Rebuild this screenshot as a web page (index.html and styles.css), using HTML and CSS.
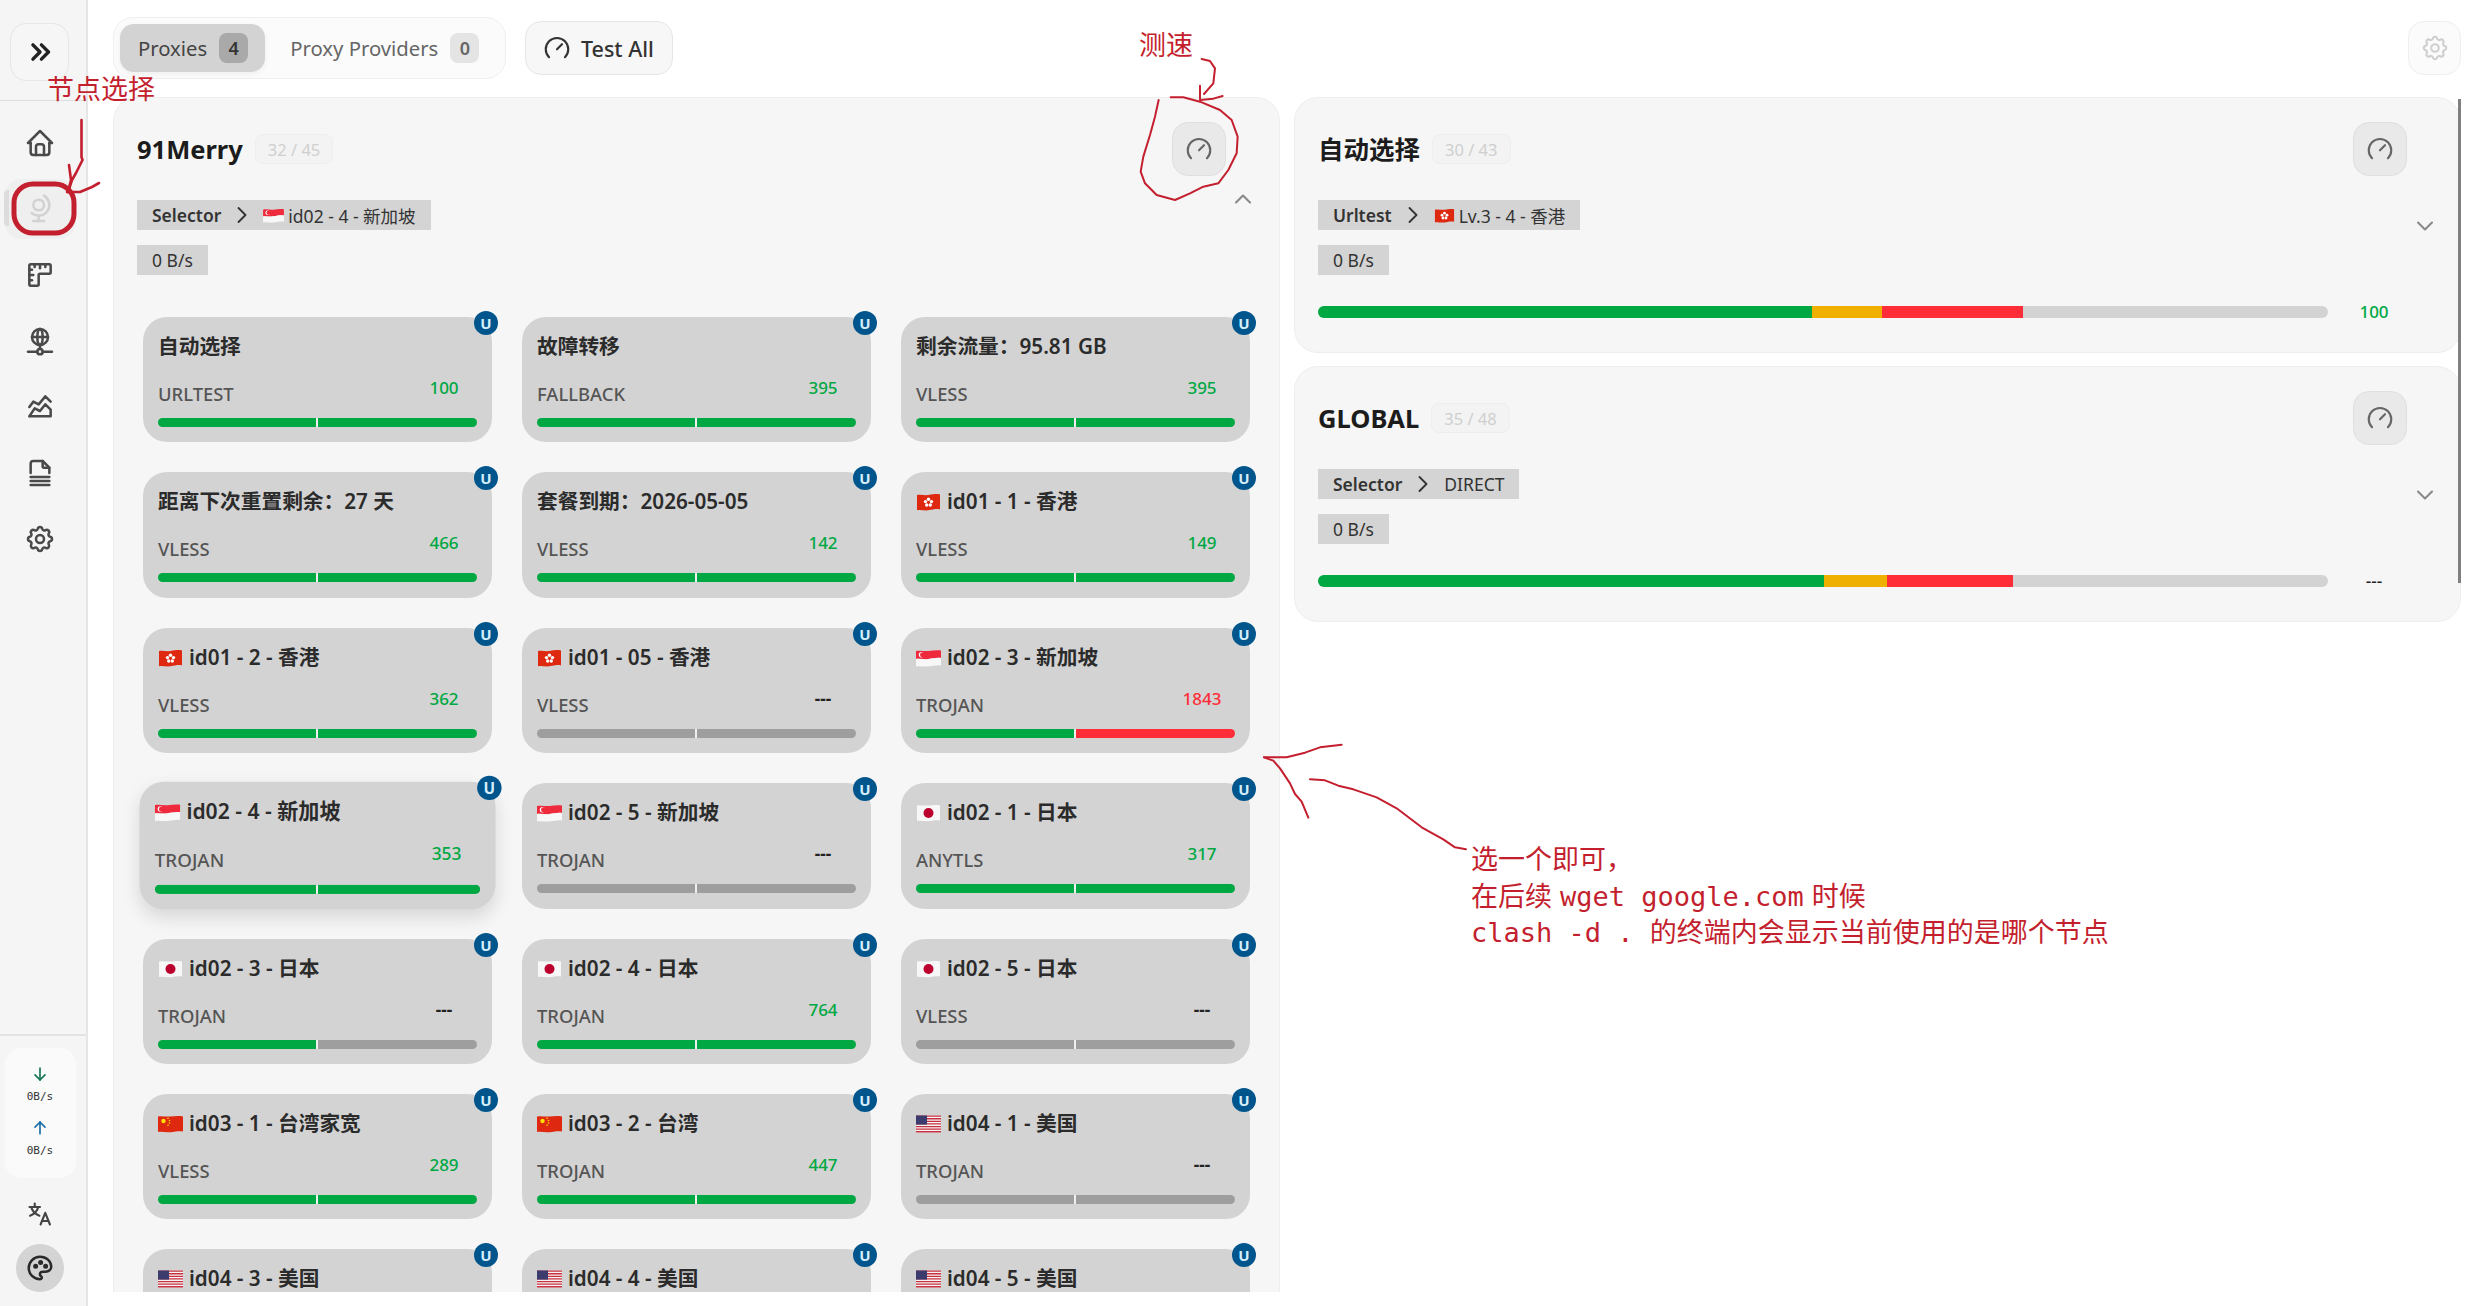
FILE: index.html
```html
<!DOCTYPE html>
<html lang="zh">
<head>
<meta charset="utf-8">
<title>Proxies</title>
<link rel="stylesheet" href="styles.css">
</head>
<body>
<svg class="defs" width="0" height="0" aria-hidden="true">
  <defs>
    <symbol id="i-home" viewBox="0 0 24 24"><path d="M5 12l-2 0l9 -9l9 9l-2 0"/><path d="M5 12v7a2 2 0 0 0 2 2h10a2 2 0 0 0 2 -2v-7"/><path d="M9 21v-6a2 2 0 0 1 2 -2h2a2 2 0 0 1 2 2v6"/></symbol>
    <symbol id="i-globe" viewBox="0 0 24 24"><path d="M7 9a4 4 0 1 0 8 0a4 4 0 0 0 -8 0"/><path d="M5.75 15a8.015 8.015 0 1 0 9.25 -13"/><path d="M11 17v4"/><path d="M7 21h8"/></symbol>
    <symbol id="i-ruler" viewBox="0 0 24 24"><path d="M5 4h14a1 1 0 0 1 1 1v5a1 1 0 0 1 -1 1h-7a1 1 0 0 0 -1 1v7a1 1 0 0 1 -1 1h-5a1 1 0 0 1 -1 -1v-14a1 1 0 0 1 1 -1"/><path d="M4 8l2 0"/><path d="M4 12l3 0"/><path d="M4 16l2 0"/><path d="M8 4l0 2"/><path d="M12 4l0 3"/><path d="M16 4l0 2"/></symbol>
    <symbol id="i-net" viewBox="0 0 24 24"><path d="M6 9a6 6 0 1 0 12 0a6 6 0 0 0 -12 0"/><path d="M12 3c1.333 .333 2 2.333 2 6s-.667 5.667 -2 6"/><path d="M12 3c-1.333 .333 -2 2.333 -2 6s.667 5.667 2 6"/><path d="M6 9h12"/><path d="M3 20h7"/><path d="M14 20h7"/><path d="M10 20a2 2 0 1 0 4 0a2 2 0 0 0 -4 0"/><path d="M12 15v3"/></symbol>
    <symbol id="i-chart" viewBox="0 0 24 24"><path d="M4 19l4 -6l4 2l4 -5l4 4l0 5l-16 0"/><path d="M4 12l3 -4l4 2l5 -6l4 4"/></symbol>
    <symbol id="i-file" viewBox="0 0 24 24"><path d="M14 3v4a1 1 0 0 0 1 1h4"/><path d="M5 12v-7a2 2 0 0 1 2 -2h7l5 5v4"/><path d="M5 21h14"/><path d="M5 18h14"/><path d="M5 15h14"/></symbol>
    <symbol id="i-gear" viewBox="0 0 24 24"><path d="M10.325 4.317c.426 -1.756 2.924 -1.756 3.35 0a1.724 1.724 0 0 0 2.573 1.066c1.543 -.94 3.31 .826 2.37 2.37a1.724 1.724 0 0 0 1.065 2.572c1.756 .426 1.756 2.924 0 3.35a1.724 1.724 0 0 0 -1.066 2.573c.94 1.543 -.826 3.31 -2.37 2.37a1.724 1.724 0 0 0 -2.572 1.065c-.426 1.756 -2.924 1.756 -3.35 0a1.724 1.724 0 0 0 -2.573 -1.066c-1.543 .94 -3.31 -.826 -2.37 -2.37a1.724 1.724 0 0 0 -1.065 -2.572c-1.756 -.426 -1.756 -2.924 0 -3.35a1.724 1.724 0 0 0 1.066 -2.573c-.94 -1.543 .826 -3.31 2.37 -2.37c1 .608 2.296 .07 2.572 -1.065"/><path d="M9 12a3 3 0 1 0 6 0a3 3 0 0 0 -6 0"/></symbol>
    <symbol id="i-speed" viewBox="0 0 24 24"><path d="M5.636 19.364a9 9 0 1 1 12.728 0"/><path d="M16 9l-4 4"/></symbol>
    <symbol id="i-dbl" viewBox="0 0 24 24"><path d="M7 7l5 5l-5 5"/><path d="M13 7l5 5l-5 5"/></symbol>
    <symbol id="i-right" viewBox="0 0 24 24"><path d="M9 6l6 6l-6 6"/></symbol>
    <symbol id="i-up" viewBox="0 0 24 24"><path d="M6 15l6 -6l6 6"/></symbol>
    <symbol id="i-down" viewBox="0 0 24 24"><path d="M6 9l6 6l6 -6"/></symbol>
    <symbol id="i-adown" viewBox="0 0 24 24"><path d="M12 5l0 14"/><path d="M18 13l-6 6"/><path d="M6 13l6 6"/></symbol>
    <symbol id="i-aup" viewBox="0 0 24 24"><path d="M12 5l0 14"/><path d="M18 11l-6 -6"/><path d="M6 11l6 -6"/></symbol>
    <symbol id="i-lang" viewBox="0 0 24 24"><path d="M3 6h9"/><path d="M7.5 3v3"/><path d="M4.5 6c.8 3.5 3.2 6 7 7.5"/><path d="M10.5 6c-.8 3.5 -3.2 6 -7 7.5"/><path d="M12.5 21l4 -10l4 10"/><path d="M14 18h5"/></symbol>
    <symbol id="i-palette" viewBox="0 0 24 24"><path d="M12 21a9 9 0 0 1 0 -18c4.97 0 9 3.582 9 8c0 1.06 -.474 2.078 -1.318 2.828c-.844 .75 -1.989 1.172 -3.182 1.172h-2.5a2 2 0 0 0 -1 3.75a1.3 1.3 0 0 1 -1 2.25"/><path d="M8.5 10.5m-1 0a1 1 0 1 0 2 0a1 1 0 1 0 -2 0"/><path d="M12.5 7.5m-1 0a1 1 0 1 0 2 0a1 1 0 1 0 -2 0"/><path d="M16.5 10.5m-1 0a1 1 0 1 0 2 0a1 1 0 1 0 -2 0"/></symbol>
    <symbol id="f-hk" viewBox="0 0 25 18"><path d="M1 2c4-1 7 .6 11.5 0S20 .6 24 1.4v15c-4-.8-7 .3-11.5 .9S5 16.400 1 17.200z" fill="#de2910"/><circle cx="12.5" cy="6.200" r="1.700" fill="#fff"/><circle cx="9.500" cy="8.600" r="1.700" fill="#fff"/><circle cx="15.500" cy="8.600" r="1.700" fill="#fff"/><circle cx="10.700" cy="12" r="1.700" fill="#fff"/><circle cx="14.300" cy="12" r="1.700" fill="#fff"/></symbol>
    <symbol id="f-sg" viewBox="0 0 25 18"><path d="M0 2c4-1 8 .5 12.500 0S21 .8 25 1.500v7.500c-4-.7-8 .4-12.500 1S4 9.400 0 10z" fill="#ee2a3c"/><path d="M0 10c4-.6 8 .6 12.500 0S21 8.300 25 9v7.500c-4-.7-8 .5-12.500 1S4 16.600 0 17.500z" fill="#f7f7f7"/><circle cx="5.500" cy="5.700" r="2.700" fill="#fff"/><circle cx="6.600" cy="5.700" r="2.500" fill="#ee2a3c"/></symbol>
    <symbol id="f-jp" viewBox="0 0 25 18"><path d="M1 1.500c4-.8 7 .5 11.500 0S20 .8 24 1.400v15c-4-.6-7 .3-11.500 .8S5 16.400 1 17z" fill="#f7f7f7"/><circle cx="12.500" cy="9" r="5" fill="#bc002d"/></symbol>
    <symbol id="f-cn" viewBox="0 0 25 18"><path d="M0 1.500c4-.8 8 .5 12.500 0S21 .8 25 1.400v15c-4-.6-8 .3-12.500 .8S4 16.400 0 17z" fill="#de2910"/><circle cx="5.500" cy="6" r="2.200" fill="#ffde00"/><circle cx="10" cy="3.200" r=".8" fill="#ffde00"/><circle cx="11.500" cy="5.500" r=".8" fill="#ffde00"/><circle cx="11.500" cy="8" r=".8" fill="#ffde00"/><circle cx="10" cy="10.200" r=".8" fill="#ffde00"/></symbol>
    <symbol id="f-us" viewBox="0 0 25 18"><rect width="25" height="17" y=".5" fill="#f5f5f5"/><path d="M0 .5h25v1.300H0zM0 3.100h25v1.300H0zM0 5.700h25v1.300H0zM0 8.300h25v1.300H0zM0 10.900h25v1.300H0zM0 13.500h25v1.300H0zM0 16.100h25v1.400H0z" fill="#c8303f"/><rect width="11" y=".5" height="9.100" fill="#3c3b6e"/></symbol>
  </defs>
</svg>

<aside class="sidebar">
  <div class="side-top">
    <button class="expand"><svg class="ico ico-expand"><use href="#i-dbl"/></svg></button>
  </div>
  <nav class="nav">
    <a class="nav-item"><svg class="ico"><use href="#i-home"/></svg></a>
    <a class="nav-item active"><svg class="ico"><use href="#i-globe"/></svg></a>
    <a class="nav-item"><svg class="ico"><use href="#i-ruler"/></svg></a>
    <a class="nav-item"><svg class="ico"><use href="#i-net"/></svg></a>
    <a class="nav-item"><svg class="ico"><use href="#i-chart"/></svg></a>
    <a class="nav-item"><svg class="ico"><use href="#i-file"/></svg></a>
    <a class="nav-item"><svg class="ico"><use href="#i-gear"/></svg></a>
  </nav>
  <div class="side-bottom">
    <div class="traffic">
      <svg class="ico-arrow down"><use href="#i-adown"/></svg>
      <span class="rate">0B/s</span>
      <svg class="ico-arrow up"><use href="#i-aup"/></svg>
      <span class="rate">0B/s</span>
    </div>
    <svg class="ico ico-lang"><use href="#i-lang"/></svg>
    <div class="palette"><svg class="ico ico-pal"><use href="#i-palette"/></svg></div>
  </div>
</aside>

<main class="main">
  <header class="topbar">
    <div class="tabs">
      <div class="tab active">Proxies <span class="count">4</span></div>
      <div class="tab">Proxy Providers <span class="count">0</span></div>
    </div>
    <button class="test-all"><svg class="ico ico-test"><use href="#i-speed"/></svg>Test All</button>
    <button class="settings"><svg class="ico ico-set"><use href="#i-gear"/></svg></button>
  </header>

  <div class="columns">
    <section class="panel panel-main">
      <div class="panel-head">
        <div class="name"><h2>91Merry</h2><span class="pill">32 / 45</span></div>
        <button class="speed"><svg class="ico ico-speed"><use href="#i-speed"/></svg></button>
      </div>
      <div class="meta">
        <div class="tags">
          <div class="tag"><b>Selector</b><svg class="ico-chev"><use href="#i-right"/></svg><svg class="flag-sm"><use href="#f-sg"/></svg>id02 - 4 - 新加坡</div>
          <div class="tag">0 B/s</div>
        </div>
        <svg class="toggle toggle-up"><use href="#i-up"/></svg>
      </div>
      <div class="grid">
        <article class="card"><span class="u">U</span><h3>自动选择</h3><div class="row"><span class="type">URLTEST</span><span class="ms good">100</span></div><div class="bar"><i class="g"></i><i class="g"></i></div></article>
        <article class="card"><span class="u">U</span><h3>故障转移</h3><div class="row"><span class="type">FALLBACK</span><span class="ms good">395</span></div><div class="bar"><i class="g"></i><i class="g"></i></div></article>
        <article class="card"><span class="u">U</span><h3>剩余流量<span class="tc">：</span>95.81 GB</h3><div class="row"><span class="type">VLESS</span><span class="ms good">395</span></div><div class="bar"><i class="g"></i><i class="g"></i></div></article>

        <article class="card"><span class="u">U</span><h3>距离下次重置剩余<span class="tc">：</span>27 天</h3><div class="row"><span class="type">VLESS</span><span class="ms good">466</span></div><div class="bar"><i class="g"></i><i class="g"></i></div></article>
        <article class="card"><span class="u">U</span><h3>套餐到期<span class="tc">：</span>2026-05-05</h3><div class="row"><span class="type">VLESS</span><span class="ms good">142</span></div><div class="bar"><i class="g"></i><i class="g"></i></div></article>
        <article class="card"><span class="u">U</span><h3><svg class="flag"><use href="#f-hk"/></svg>id01 - 1 - 香港</h3><div class="row"><span class="type">VLESS</span><span class="ms good">149</span></div><div class="bar"><i class="g"></i><i class="g"></i></div></article>

        <article class="card"><span class="u">U</span><h3><svg class="flag"><use href="#f-hk"/></svg>id01 - 2 - 香港</h3><div class="row"><span class="type">VLESS</span><span class="ms good">362</span></div><div class="bar"><i class="g"></i><i class="g"></i></div></article>
        <article class="card"><span class="u">U</span><h3><svg class="flag"><use href="#f-hk"/></svg>id01 - 05 - 香港</h3><div class="row"><span class="type">VLESS</span><span class="ms none">---</span></div><div class="bar"><i class="n"></i><i class="n"></i></div></article>
        <article class="card"><span class="u">U</span><h3><svg class="flag"><use href="#f-sg"/></svg>id02 - 3 - 新加坡</h3><div class="row"><span class="type">TROJAN</span><span class="ms bad">1843</span></div><div class="bar"><i class="g"></i><i class="r"></i></div></article>

        <article class="card selected"><span class="u">U</span><h3><svg class="flag"><use href="#f-sg"/></svg>id02 - 4 - 新加坡</h3><div class="row"><span class="type">TROJAN</span><span class="ms good">353</span></div><div class="bar"><i class="g"></i><i class="g"></i></div></article>
        <article class="card"><span class="u">U</span><h3><svg class="flag"><use href="#f-sg"/></svg>id02 - 5 - 新加坡</h3><div class="row"><span class="type">TROJAN</span><span class="ms none">---</span></div><div class="bar"><i class="n"></i><i class="n"></i></div></article>
        <article class="card"><span class="u">U</span><h3><svg class="flag"><use href="#f-jp"/></svg>id02 - 1 - 日本</h3><div class="row"><span class="type">ANYTLS</span><span class="ms good">317</span></div><div class="bar"><i class="g"></i><i class="g"></i></div></article>

        <article class="card"><span class="u">U</span><h3><svg class="flag"><use href="#f-jp"/></svg>id02 - 3 - 日本</h3><div class="row"><span class="type">TROJAN</span><span class="ms none">---</span></div><div class="bar"><i class="g"></i><i class="n"></i></div></article>
        <article class="card"><span class="u">U</span><h3><svg class="flag"><use href="#f-jp"/></svg>id02 - 4 - 日本</h3><div class="row"><span class="type">TROJAN</span><span class="ms good">764</span></div><div class="bar"><i class="g"></i><i class="g"></i></div></article>
        <article class="card"><span class="u">U</span><h3><svg class="flag"><use href="#f-jp"/></svg>id02 - 5 - 日本</h3><div class="row"><span class="type">VLESS</span><span class="ms none">---</span></div><div class="bar"><i class="n"></i><i class="n"></i></div></article>

        <article class="card"><span class="u">U</span><h3><svg class="flag"><use href="#f-cn"/></svg>id03 - 1 - 台湾家宽</h3><div class="row"><span class="type">VLESS</span><span class="ms good">289</span></div><div class="bar"><i class="g"></i><i class="g"></i></div></article>
        <article class="card"><span class="u">U</span><h3><svg class="flag"><use href="#f-cn"/></svg>id03 - 2 - 台湾</h3><div class="row"><span class="type">TROJAN</span><span class="ms good">447</span></div><div class="bar"><i class="g"></i><i class="g"></i></div></article>
        <article class="card"><span class="u">U</span><h3><svg class="flag"><use href="#f-us"/></svg>id04 - 1 - 美国</h3><div class="row"><span class="type">TROJAN</span><span class="ms none">---</span></div><div class="bar"><i class="n"></i><i class="n"></i></div></article>

        <article class="card"><span class="u">U</span><h3><svg class="flag"><use href="#f-us"/></svg>id04 - 3 - 美国</h3></article>
        <article class="card"><span class="u">U</span><h3><svg class="flag"><use href="#f-us"/></svg>id04 - 4 - 美国</h3></article>
        <article class="card"><span class="u">U</span><h3><svg class="flag"><use href="#f-us"/></svg>id04 - 5 - 美国</h3></article>
      </div>
    </section>

    <div class="side-col">
      <section class="panel panel-small">
        <div class="panel-head">
          <div class="name"><h2>自动选择</h2><span class="pill">30 / 43</span></div>
          <button class="speed"><svg class="ico ico-speed"><use href="#i-speed"/></svg></button>
        </div>
        <div class="meta">
          <div class="tags">
            <div class="tag"><b>Urltest</b><svg class="ico-chev"><use href="#i-right"/></svg><svg class="flag-sm"><use href="#f-hk"/></svg>Lv.3 - 4 - 香港</div>
            <div class="tag">0 B/s</div>
          </div>
          <svg class="toggle toggle-down"><use href="#i-down"/></svg>
        </div>
        <div class="usage">
          <div class="stack"><i class="s-g s1"></i><i class="s-y s2"></i><i class="s-r s3"></i></div>
          <span class="usage-ms good">100</span>
        </div>
      </section>
      <section class="panel panel-small">
        <div class="panel-head">
          <div class="name"><h2>GLOBAL</h2><span class="pill">35 / 48</span></div>
          <button class="speed"><svg class="ico ico-speed"><use href="#i-speed"/></svg></button>
        </div>
        <div class="meta">
          <div class="tags">
            <div class="tag"><b>Selector</b><svg class="ico-chev"><use href="#i-right"/></svg>DIRECT</div>
            <div class="tag">0 B/s</div>
          </div>
          <svg class="toggle toggle-down"><use href="#i-down"/></svg>
        </div>
        <div class="usage">
          <div class="stack"><i class="s-g s4"></i><i class="s-y s5"></i><i class="s-r s6"></i></div>
          <span class="usage-ms none">---</span>
        </div>
      </section>
    </div>
    <div class="scrollbar"></div>
  </div>
</main>

<svg class="ink" width="2480" height="1306" viewBox="0 0 2480 1306" aria-hidden="true">
  <rect class="ink-thick" x="14" y="184" width="60" height="49" rx="19"/>
  <g class="ink-line">
    <path d="M81.500 120 81.500 157 82.500 160 76 173 72 180 68 192"/>
    <path d="M69 165 71 180 68 192"/>
    <path d="M67 192 80 192 92 187 99 183"/>
  </g>
  <g class="ink-z" transform="translate(1100 20) scale(.3333)">
    <path d="M176 240 165 290 150 345 130 410 122 455 135 490 170 525 225 540 270 520 310 500 355 490 385 450 410 400 413 350 395 300 360 270 300 245 250 232 212 232"/>
    <path d="M305 117 330 123 345 145 340 190 312 222"/>
    <path d="M300 197 300 240 340 236 368 228"/>
  </g>
  <g class="ink-z" transform="translate(1240 720) scale(.3333)">
    <path d="M72 112 140 112 195 98 240 82 305 74"/>
    <path d="M72 112 100 122 120 145 150 190 165 222 185 245 205 293"/>
    <path d="M210 178 255 181 295 197 340 208 410 232 470 265 545 322 610 358 645 382 678 388"/>
  </g>
</svg>
<p class="note note-node">节点选择</p>
<p class="note note-speed">测速</p>
<p class="note note-main"><span class="ln">选一个即可<span class="tc">，</span></span><span class="ln">在后续<span class="thin"></span>wget google.com<span class="thin"></span>时候</span><span class="ln">clash -d . 的终端内会显示当前使用的是哪个节点</span></p>
</body>
</html>
```

FILE: styles.css
```css
* { box-sizing: border-box; }
html, body { margin: 0; height: 100%; }
body {
  display: flex;
  height: 100vh;
  overflow: hidden;
  position: relative;
  background: #fff;
  color: #333;
  font-family: "Noto Sans", "Noto Sans CJK SC", sans-serif;
}
.defs { position: absolute; }
button { font: inherit; color: inherit; padding: 0; }
h2, h3, p { margin: 0; }
i { display: block; }
.tc { font-family: "Noto Sans CJK TC", sans-serif; line-height: 1; }

.ico { width: 32px; height: 32px; fill: none; stroke: #4a4a4a; stroke-width: 1.9; stroke-linecap: round; stroke-linejoin: round; }

/* sidebar */
.sidebar {
  width: 88px;
  flex: none;
  display: flex;
  flex-direction: column;
  background: #f5f5f5;
  border-right: 2px solid #e6e6e6;
}
.side-top { height: 101px; padding: 23px 0 0 10px; border-bottom: 1px solid #dedede; }
.expand {
  width: 59px; height: 58px;
  display: flex; align-items: center; justify-content: center;
  background: #f6f6f6;
  border: 1px solid #e6e6e6;
  border-radius: 16px;
}
.ico-expand { width: 34px; height: 34px; stroke: #222; stroke-width: 2.4; }
.nav { display: flex; flex-direction: column; gap: 6px; padding: 12px 0 0; }
.nav-item {
  height: 60px;
  margin: 0 10px 0 4px;
  display: flex; align-items: center; justify-content: center;
  border-radius: 18px;
  position: relative;
}
.nav-item .ico { margin-left: -8px; margin-right: -8px; }
.nav-item.active { background: #efefef; }
.nav-item.active::before {
  content: ""; position: absolute; left: 0; top: 11px; width: 5px; height: 36px;
  background: #dcdcdc; border-radius: 4px 0 0 4px;
}
.nav-item.active .ico { stroke: #d2d2d2; }
.side-bottom { margin-top: auto; border-top: 2px solid #e3e3e3; padding: 12px 0 14px; display: flex; flex-direction: column; align-items: center; }
.traffic {
  width: 71px; height: 130px;
  margin: 0 6px 0 0;
  padding-top: 16px;
  background: #fafafa;
  border-radius: 16px;
  display: flex; flex-direction: column; align-items: center;
}
.ico-arrow { width: 20px; height: 20px; fill: none; stroke-width: 2; stroke-linecap: round; stroke-linejoin: round; }
.ico-arrow.down { stroke: #17775a; }
.ico-arrow.up { stroke: #1b6ea8; margin-top: 13px; }
.rate { font: 11px/16px "DejaVu Sans Mono", monospace; color: #333; margin-top: 5px; }
.ico-lang { width: 28px; height: 28px; margin: 22px 6px 0 0; stroke: #444; stroke-width: 1.8; }
.palette {
  width: 48px; height: 48px; margin: 16px 6px 0 0;
  border-radius: 50%; background: #d4d4d4;
  display: flex; align-items: center; justify-content: center;
}
.ico-pal { width: 30px; height: 30px; stroke: #2a2a2a; stroke-width: 2; }

/* main */
.main { flex: 1; min-width: 0; padding: 17px 19px 14px 25px; display: flex; flex-direction: column; }
.topbar { display: flex; align-items: center; gap: 19px; height: 62px; margin-bottom: 18px; flex: none; }
.tabs {
  display: flex; align-items: center; gap: 0;
  height: 62px; width: 393px; padding: 0 6px;
  background: #fbfbfb; border: 1px solid #efefef; border-radius: 20px;
}
.tab {
  height: 48px; padding: 0 17px 0 18px;
  display: flex; align-items: center; gap: 12px;
  font-size: 20.300px; color: #666; border-radius: 14px;
}
.tab:last-child { padding-left: 25px; gap: 12px; }
.tab.active { background: #d3d3d3; color: #444; box-shadow: 0 2px 6px rgba(0,0,0,.05); }
.count {
  min-width: 29px; height: 30px; padding: 0 8px;
  display: flex; align-items: center; justify-content: center;
  border-radius: 8px; background: #e4e4e4; font-size: 18px; font-weight: 600; color: #666;
}
.tab.active .count { background: #a9a9a9; color: #333; }
.test-all {
  width: 148px; height: 54px;
  display: flex; align-items: center; gap: 9px; padding-left: 16px;
  background: #f7f7f7; border: 1px solid #e6e6e6; border-radius: 16px;
  font-size: 21.500px; font-weight: 500; color: #333;
}
.ico-test { width: 30px; height: 30px; stroke: #333; stroke-width: 1.7; }
.settings {
  margin-left: auto; width: 53px; height: 54px;
  display: flex; align-items: center; justify-content: center;
  background: #fbfbfb; border: 1px solid #eee; border-radius: 16px;
}
.ico-set { width: 30px; height: 30px; stroke: #cfcfcf; stroke-width: 1.7; }

.columns {
  flex: 1; min-height: 0; overflow: hidden; position: relative;
  display: grid; grid-template-columns: 1167px 1167px; column-gap: 14px; align-items: start;
}
.panel {
  position: relative;
  background: #f6f6f6;
  border: 1px solid #eeeeee;
  border-radius: 24px;
  padding: 24px 30px 0 23px;
}
.panel-main { border-radius: 24px 24px 0 0; min-height: 1300px; }
.side-col { display: flex; flex-direction: column; gap: 13px; }
.panel-small { height: 256px; }
.panel-head { display: flex; align-items: center; justify-content: space-between; height: 54px; padding-right: 23px; }
.name { display: flex; align-items: center; gap: 12px; }
h2 { font-size: 25.500px; font-weight: 700; color: #1c1c1c; line-height: 36px; }
.pill {
  height: 30px; padding: 0 12px;
  display: flex; align-items: center;
  font-size: 16.500px; color: #cfcfcf;
  background: #f3f3f3; border: 1px solid #eeeeee; border-radius: 8px;
}
.speed {
  width: 54px; height: 54px;
  display: flex; align-items: center; justify-content: center;
  background: #e9e9e9; border: 1px solid #dfdfdf; border-radius: 16px;
}
.ico-speed { width: 30px; height: 30px; stroke: #666; stroke-width: 1.7; }

.meta { display: flex; justify-content: space-between; align-items: flex-start; margin-top: 24px; }
.tags { display: flex; flex-direction: column; align-items: flex-start; gap: 15px; }
.tag {
  height: 30px; padding: 0 15px;
  display: flex; align-items: center;
  background: #d4d4d4;
  font-size: 17.500px; color: #333;
}
.tag b { font-weight: 600; }
.ico-chev { width: 28px; height: 28px; margin: 0 7px; fill: none; stroke: #333; stroke-width: 1.6; stroke-linecap: round; stroke-linejoin: round; }
.flag-sm { width: 21px; height: 15px; margin-right: 4px; }
.toggle { width: 28px; height: 28px; fill: none; stroke: #888; stroke-width: 1.8; stroke-linecap: round; stroke-linejoin: round; }
.toggle-up { margin: -15px -8px 0 0; }
.toggle-down { margin: 12px -9px 0 0; }

.grid {
  display: grid;
  grid-template-columns: repeat(3, 349px);
  grid-auto-rows: 125.400px;
  column-gap: 30px;
  row-gap: 30px;
  margin: 42px 0 0 6px;
}
.card {
  position: relative;
  background: #d3d3d3;
  border-radius: 24px;
  padding: 16px 15px 0;
}
.card.selected { transform: scale(1.02); box-shadow: 0 8px 18px rgba(0,0,0,.12); }
.card h3 {
  height: 26px;
  font-size: 20.700px; line-height: 26px; font-weight: 600; color: #2b2b2b;
  white-space: pre;
}
.flag { width: 25px; height: 18px; margin-right: 6px; vertical-align: -2px; }
.u {
  position: absolute; top: -6px; right: -6px;
  width: 24px; height: 24px; border-radius: 50%;
  background: #00558c; color: #d5eefc;
  display: flex; align-items: center; justify-content: center;
  font-size: 15px; font-weight: 700;
}
.row { display: flex; justify-content: space-between; height: 49px; padding-top: 23px; }
.type { font-size: 18.400px; line-height: 24px; font-weight: 500; color: #555; }
.ms { width: 66px; text-align: center; font-size: 17px; line-height: 24px; font-weight: 500; margin-top: -6px; }
.good { color: #00a843; }
.bad { color: #ff2d38; }
.none { color: #222; font-weight: 700; }
.bar { display: flex; height: 9px; margin-top: 10px; border-radius: 5px; overflow: hidden; }
.bar i { flex: 1; }
.bar i + i { border-left: 2px solid #efefef; margin-left: -1px; }
.bar .g { background: #00a843; }
.bar .r { background: #ff2d38; }
.bar .n { background: #9e9e9e; }

.usage { display: flex; align-items: center; margin-top: 25px; }
.stack { width: 1010px; height: 12px; display: flex; background: #d3d3d3; border-radius: 6px; overflow: hidden; }
.s-g { background: #00a843; }
.s-y { background: #f0b000; }
.s-r { background: #ff2d38; }
.s1 { width: 494px; } .s2 { width: 70px; } .s3 { width: 141px; }
.s4 { width: 506px; } .s5 { width: 63px; } .s6 { width: 126px; }
.usage-ms { width: 92px; text-align: center; font-size: 17px; font-weight: 500; }

.scrollbar { position: absolute; right: 0; top: 2px; width: 3px; height: 484px; background: #808080; }

/* hand-drawn annotation layer */
.ink { position: absolute; left: 0; top: 0; pointer-events: none; }
.ink-thick { fill: none; stroke: #c41f2e; stroke-width: 5; }
.ink-line { fill: none; stroke: #c41f2e; stroke-width: 2.600; stroke-linecap: round; stroke-linejoin: round; }
.ink-z { fill: none; stroke: #c41f2e; stroke-width: 6; stroke-linecap: round; stroke-linejoin: round; }
.note {
  position: absolute;
  color: #c41f2e;
  font-size: 27px;
  line-height: 36.800px;
  font-family: "DejaVu Sans Mono", "Noto Sans CJK SC", monospace;
  white-space: pre;
}
.ln { display: block; height: 36.500px; }
.thin { display: inline-block; width: 8px; }
.note-node { left: 47px; top: 72px; }
.note-speed { left: 1139px; top: 28px; }
.note-main { left: 1471px; top: 842px; }
```
